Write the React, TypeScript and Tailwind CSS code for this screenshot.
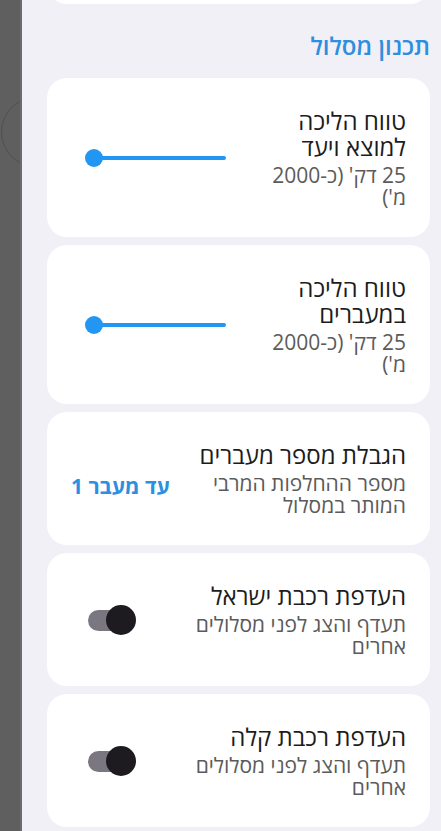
import React from 'react';

const font = { fontFamily: '"Open Sans", "DejaVu Sans", sans-serif' };

function RangeSlider() {
  return (
    <div className="relative h-[18px] w-[141px]">
      <div className="absolute left-[9px] right-0 top-[7px] h-[4px] rounded-full bg-[#2196f3]" />
      <div className="absolute left-0 top-0 h-[18px] w-[18px] rounded-full bg-[#2196f3]" />
    </div>
  );
}

function Toggle() {
  return (
    <div className="relative h-[30px] w-[48px]">
      <div className="absolute left-0 top-[5px] h-[21px] w-[40px] rounded-full bg-[#7b7781]" />
      <div className="absolute right-0 top-0 h-[30px] w-[30px] rounded-full bg-[#1d1b20]" />
    </div>
  );
}

function SettingCard({
  title,
  subtitle,
  narrow,
  control
}: {
  title: string;
  subtitle: string;
  narrow?: boolean;
  control: React.ReactNode;
}) {
  return (
    <div className="flex items-center gap-2 rounded-[20px] bg-white pl-[24px] pr-[24px] pt-[30px] pb-[29px]">
      <div className={narrow ? 'w-[150px] shrink-0 text-right' : 'min-w-0 flex-1 text-right'}>
        <div className="text-[24px] leading-[26px] text-[#1c1c1c]">{title}</div>
        <div className="mt-[4px] text-[21px] leading-[22px] text-[#5b5b5b]">{subtitle}</div>
      </div>
      <div className={narrow ? 'flex flex-1 justify-end' : 'flex shrink-0 justify-end'}>{control}</div>
    </div>
  );
}

export default function App() {
  return (
    <div className="flex h-[831px] w-[441px] overflow-hidden" style={font}>
      {/* dimmed background behind the sheet */}
      <div className="relative w-[22px] shrink-0 overflow-hidden bg-[#5f5f5f]">
        <div className="absolute left-[1px] top-[97px] h-[70px] w-[70px] rounded-full border border-[#4f4f4f]" />
        <div className="absolute right-0 top-0 h-full w-[2px] bg-[#6c6c6c]" />
      </div>

      <div dir="rtl" className="flex flex-1 flex-col bg-[#f2f0f7] pl-[25px] pr-[11px]">
        <div className="-mt-[56px] h-[60px] shrink-0 rounded-[20px] bg-white" />

        <div className="mt-[28px] mb-[18px] text-[24px] font-semibold leading-[28px] text-[#2c8fdf]">
          תכנון מסלול
        </div>

        <div className="flex flex-col gap-[8px]">
          <SettingCard
            narrow
            title="טווח הליכה למוצא ויעד"
            subtitle="25 דק' (כ-2000 מ')"
            control={<div className="pl-[14px]"><RangeSlider /></div>}
          />
          <SettingCard
            narrow
            title="טווח הליכה במעברים"
            subtitle="25 דק' (כ-2000 מ')"
            control={<div className="pl-[14px]"><RangeSlider /></div>}
          />
          <SettingCard
            title="הגבלת מספר מעברים"
            subtitle="מספר ההחלפות המרבי המותר במסלול"
            control={
              <span className="pt-[14px] text-[21px] font-bold leading-[26px] text-[#2c8fdf]">עד מעבר 1</span>
            }
          />
          <SettingCard
            title="העדפת רכבת ישראל"
            subtitle="תעדף והצג לפני מסלולים אחרים"
            control={<div className="pl-[17px]"><Toggle /></div>}
          />
          <SettingCard
            title="העדפת רכבת קלה"
            subtitle="תעדף והצג לפני מסלולים אחרים"
            control={<div className="pl-[17px]"><Toggle /></div>}
          />
        </div>
      </div>
    </div>
  );
}
